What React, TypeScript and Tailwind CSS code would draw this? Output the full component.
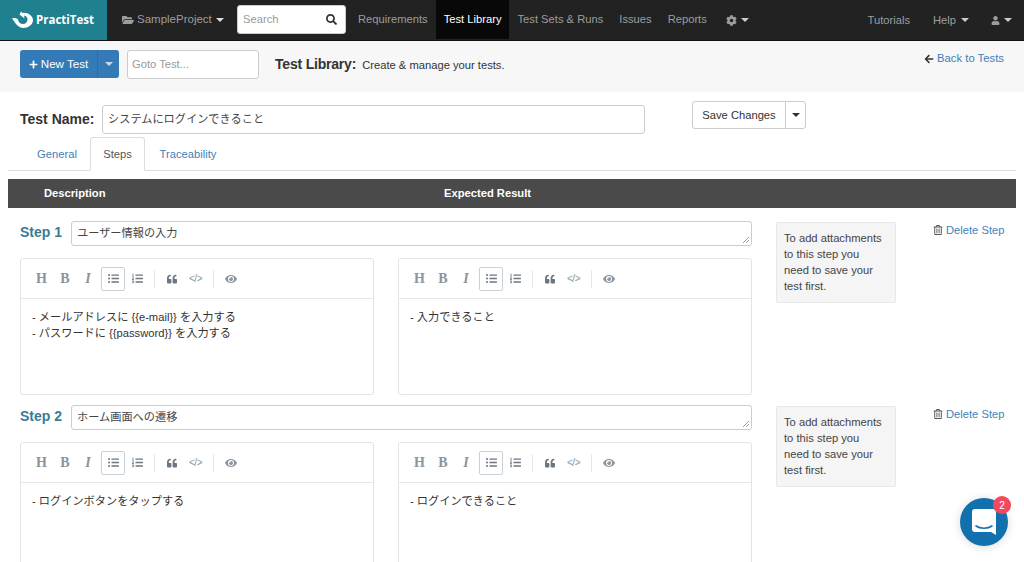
import React from "react";
import { FaFolderOpen, FaSearch, FaCog, FaUser, FaPlus, FaArrowLeft, FaRegTrashAlt, FaListUl, FaListOl, FaQuoteLeft, FaEye } from "react-icons/fa";

const font = { fontFamily: '"Liberation Sans", "Noto Sans CJK JP", sans-serif' };

function Caret({ className = "" }: { className?: string }) {
  return <span className={`inline-block w-0 h-0 border-x-[4px] border-x-transparent border-t-[4px] border-t-current ${className}`} />;
}

function Logo() {
  return (
    <svg width="22" height="18" viewBox="0 0 22 18" className="shrink-0">
      <path d="M0 7.500 C2.500 6.600 4.500 7.200 6 8.500 C6.500 11.500 8.500 13 11 13 C13.500 13 15.500 11 15.500 8.500 C15.500 6.500 14 4.800 12 4.500 L12.500 7.500 L7.500 3.500 L9 0.500 L10.500 2 C11 1.900 11.500 1.800 12 1.800 C16.500 1.800 21 5 21 9.300 C21 13.800 16 17 11.500 17 C6.500 17 3.500 12.500 0 7.500 Z" fill="#fff" />
    </svg>
  );
}

function NavItem({ label, active = false }: { label: string; active?: boolean }) {
  return (
    <div className={`h-[39px] px-2 flex items-center ${active ? "bg-[#080808] text-white" : "text-[#9d9d9d]"}`}>{label}</div>
  );
}

function Toolbar() {
  const sep = <div className="w-px h-[18px] bg-[#e8e8e8]" />;
  return (
    <div className="h-[40px] border-b border-[#e6e6e6] flex items-center pl-[10px] text-[#8a949e]">
      <span className="w-[21px] text-center text-[14px] font-bold leading-none" style={{ fontFamily: '"Liberation Serif", serif' }}>H</span>
      <span className="w-[26px] text-center text-[14px] font-bold leading-none" style={{ fontFamily: '"Liberation Serif", serif' }}>B</span>
      <span className="w-[20px] text-center text-[14px] italic font-bold leading-none" style={{ fontFamily: '"Liberation Serif", serif' }}>I</span>
      <span className="w-[24px] h-[24px] ml-[3px] border border-[#c9d0d6] rounded-[2px] flex items-center justify-center text-[#6b7680]"><FaListUl className="text-[11px]" /></span>
      <span className="w-[24px] flex justify-center text-[#6b7680]"><FaListOl className="text-[11px]" /></span>
      <span className="ml-[5px] mr-[11px]">{sep}</span>
      <span className="w-[12px] flex justify-center text-[#6b7680]"><FaQuoteLeft className="text-[10px]" /></span>
      <span className="w-[35px] text-center text-[10px] tracking-[-0.5px] leading-none">{"</>"}</span>
      {sep}
      <span className="ml-[11px] w-[12px] flex justify-center"><FaEye className="text-[12px]" /></span>
    </div>
  );
}

function Editor({ lines }: { lines: string[] }) {
  return (
    <div className="w-[354px] h-[137px] shrink-0 bg-white border border-[#e3e3e3] rounded-[3px]">
      <Toolbar />
      <div className="px-[11px] pt-[10px] text-[11.2px] leading-[16px] text-[#333]">
        {lines.map((l) => (
          <div key={l}>{l}</div>
        ))}
      </div>
    </div>
  );
}

function Step({ n, title, left, right }: { n: number; title: string; left: string[]; right: string[] }) {
  return (
    <div className="flex items-start pl-5 mb-[10px]">
      <div className="w-[732px] shrink-0">
        <div className="flex items-center h-[25px]">
          <div className="w-[51px] shrink-0 text-[14px] font-bold text-[#3a7c98] pb-[2px]">Step {n}</div>
          <div className="relative flex-1 h-[25px] border border-[#ccc] rounded-[3px] px-[5px] flex items-center text-[11.2px] text-[#444]">
            {title}
            <svg width="9" height="9" viewBox="0 0 9 9" className="absolute right-[1px] bottom-[1px]">
              <path d="M8 2 L2 8 M8 5 L5 8" stroke="#888" strokeWidth="0.8" />
            </svg>
          </div>
        </div>
        <div className="flex gap-6 mt-3">
          <Editor lines={left} />
          <Editor lines={right} />
        </div>
      </div>
      <div className="ml-6 mt-[1px] w-[120px] h-[81px] shrink-0 bg-[#f5f5f5] border border-[#e8e8e8] rounded-[2px] pl-[7px] pr-[12px] pt-[7px] text-[11.2px] leading-[16px] text-[#444]">
        To add attachments to this step you need to save your test first.
      </div>
      <div className="ml-[37px] h-[18px] flex items-center gap-[3px] text-[11.2px] text-[#3f7fb8] whitespace-nowrap">
        <FaRegTrashAlt className="text-[10px] text-[#555]" />
        Delete Step
      </div>
    </div>
  );
}

export default function App() {
  return (
    <div className="relative w-[1024px] h-[562px] overflow-hidden bg-white text-[#333]" style={font}>
      <div className="h-[41px] bg-[#222] border-b border-[#111] flex text-[11.2px]">
        <div className="w-[107px] h-full bg-[#1f8090] flex items-center pl-[12px] gap-[2px] text-white font-bold text-[11.5px]" style={{ fontFamily: '"Open Sans", sans-serif' }}>
          <Logo />
          PractiTest
        </div>
        <div className="ml-[15px] w-[115px] flex items-center gap-[3px] text-[#9d9d9d] text-[11.5px]">
          <FaFolderOpen className="text-[12px]" />
          SampleProject
          <Caret className="ml-[1px] text-[#ddd]" />
        </div>
        <div className="w-[109px] h-[29px] mt-[5px] bg-white rounded-[3px] border border-[#ccc] flex items-center justify-between pl-[5px] pr-[8px] text-[#999]">
          Search
          <FaSearch className="text-[11px] text-[#333]" />
        </div>
        <div className="ml-[4px] flex">
          <NavItem label="Requirements" />
          <NavItem label="Test Library" active />
          <NavItem label="Test Sets & Runs" />
          <NavItem label="Issues" />
          <NavItem label="Reports" />
        </div>
        <div className="ml-[11px] flex items-center gap-[4px] text-[#9d9d9d]">
          <FaCog className="text-[11px]" />
          <Caret className="text-[#ccc]" />
        </div>
        <div className="ml-auto flex items-center text-[#9d9d9d] pr-3">
          <span>Tutorials</span>
          <span className="ml-[23px]">Help</span>
          <Caret className="ml-[5px] text-[#ccc]" />
          <FaUser className="ml-[22px] text-[9px]" />
          <Caret className="ml-[4px] text-[#ccc]" />
        </div>
      </div>

      <div className="h-[51px] bg-[#f7f7f7] flex pl-5 pr-5 pt-[9px]">
        <div className="h-[28px] w-[99px] bg-[#337ab7] rounded-[3px] flex items-center text-white text-[11.6px]">
          <div className="w-[78px] h-full flex items-center justify-center gap-[3px] border-r border-[#2e6da4]">
            <FaPlus className="text-[9px]" />
            New Test
          </div>
          <div className="flex-1 flex justify-center text-[#c8d9ea]">
            <Caret />
          </div>
        </div>
        <div className="ml-[8px] w-[132px] h-[29px] bg-white border border-[#ccc] rounded-[3px] flex items-center px-[4px] text-[11.2px] text-[#999]">Goto Test...</div>
        <div className="ml-[16px] h-[29px] flex items-center text-[14px] font-bold text-[#333] tracking-[-0.2px]">Test Library:</div>
        <div className="ml-[6px] h-[31px] flex items-center text-[11.2px] text-[#333]">Create &amp; manage your tests.</div>
        <div className="ml-auto h-[17px] flex items-center gap-[3px] text-[11.3px] text-[#3f7fb8]">
          <FaArrowLeft className="text-[10px] text-[#333]" />
          Back to Tests
        </div>
      </div>

      <div className="flex items-start pl-5 mt-[9px]">
        <div className="w-[82px] h-[28px] mt-[4px] flex items-center text-[14px] font-bold text-[#333]">Test Name:</div>
        <div className="w-[543px] h-[29px] mt-[4px] border border-[#ccc] rounded-[3px] flex items-center px-[5px] text-[11.2px] text-[#444]">システムにログインできること</div>
        <div className="ml-[47px] h-[28px] flex border border-[#ccc] rounded-[3px] text-[11.2px] text-[#333]">
          <div className="w-[93px] flex items-center justify-center border-r border-[#ccc]">Save Changes</div>
          <div className="w-[19px] flex items-center justify-center">
            <Caret />
          </div>
        </div>
      </div>

      <div className="mt-[3px] mx-2 h-[34px] border-b border-[#ddd] flex pl-[16px] text-[11.2px]">
        <div className="w-[66px] h-[34px] flex items-center justify-center text-[#3f7fb8]">General</div>
        <div className="w-[55px] h-[34px] flex items-center justify-center bg-white border border-[#ddd] border-b-white rounded-t-[3px] text-[#555]">Steps</div>
        <div className="w-[86px] h-[34px] flex items-center justify-center text-[#3f7fb8]">Traceability</div>
      </div>

      <div className="mt-2 mx-2 h-[29px] bg-[#4a4a4a] flex items-center text-white font-bold text-[11.2px]">
        <div className="w-[436px] pl-[36px]">Description</div>
        <div>Expected Result</div>
      </div>

      <div className="mt-[13px]">
        <Step n={1} title="ユーザー情報の入力" left={["- メールアドレスに {{e-mail}} を入力する", "- パスワードに {{password}} を入力する"]} right={["- 入力できること"]} />
        <Step n={2} title="ホーム画面への遷移" left={["- ログインボタンをタップする"]} right={["- ログインできること"]} />
      </div>

      <div className="absolute left-[960px] top-[498px] w-12 h-12 rounded-full bg-[#1170ad] shadow-[0_1px_10px_rgba(0,0,0,0.15)] flex items-center justify-center">
        <svg width="24" height="26" viewBox="0 0 24 26">
          <path d="M3 0 H21 A3 3 0 0 1 24 3 V26 L19 23 H3 A3 3 0 0 1 0 20 V3 A3 3 0 0 1 3 0 Z" fill="#fff" />
          <path d="M4 17 C8 20 16 20 20 17" stroke="#1170ad" strokeWidth="1.600" fill="none" strokeLinecap="round" />
        </svg>
      </div>
      <div className="absolute left-[993px] top-[496px] w-[18px] h-[18px] rounded-full bg-[#f4485f] text-white text-[10px] flex items-center justify-center">2</div>
    </div>
  );
}
